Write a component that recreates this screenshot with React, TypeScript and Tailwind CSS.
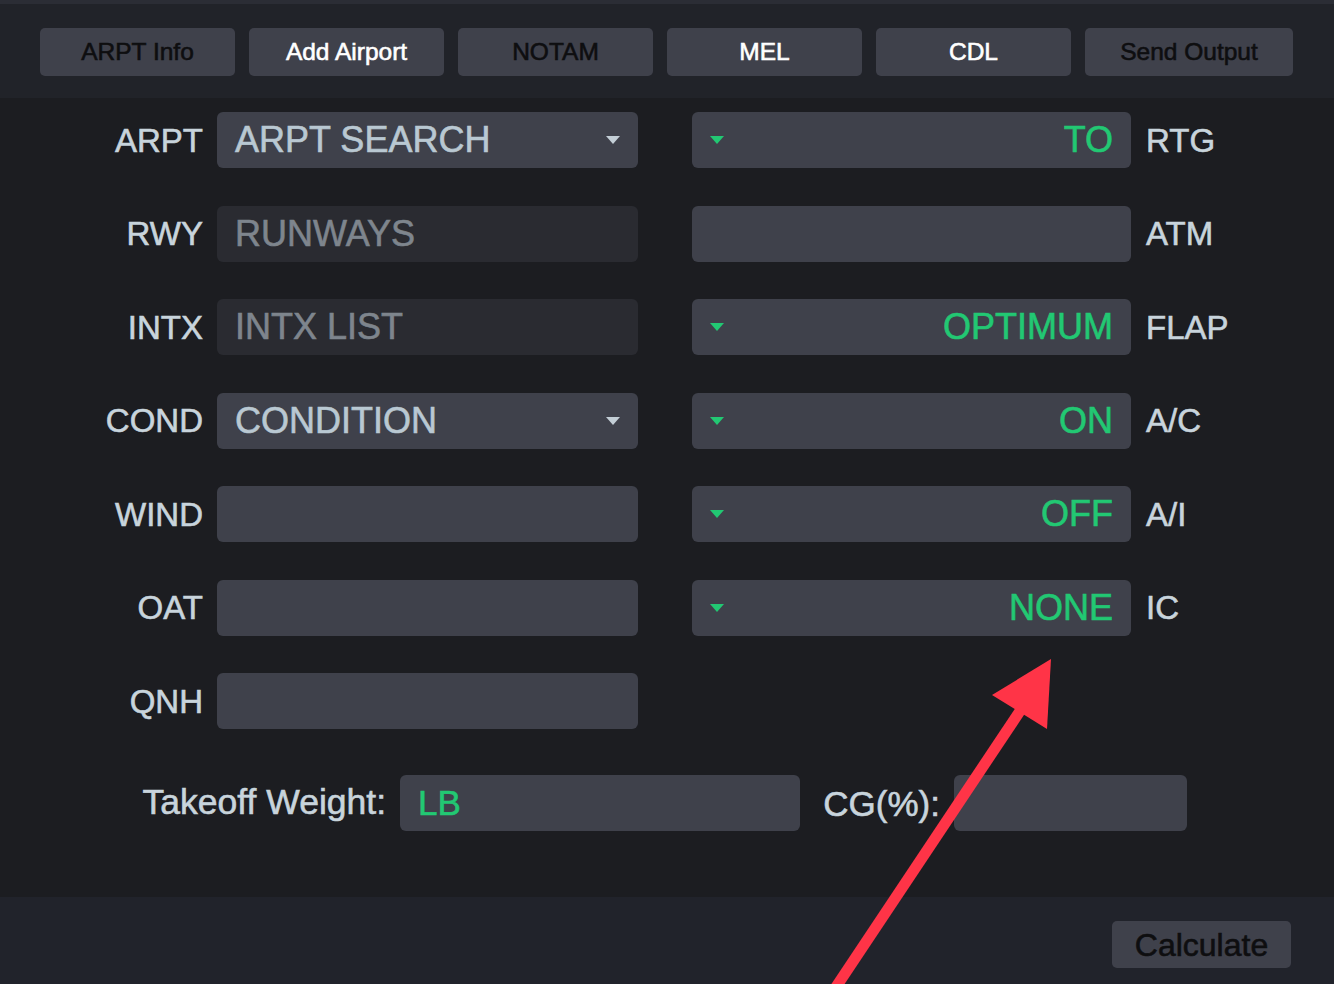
import React from "react";

const Caret = ({ green }: { green?: boolean }) => (
  <svg width="14" height="8" viewBox="0 0 14 8" className="shrink-0">
    <polygon points="0,0 14,0 7,8" fill={green ? "#22c873" : "#c3ced6"} />
  </svg>
);

function LeftField({ label, value, kind }: { label: string; value?: string; kind: "select" | "dim" | "empty" }) {
  const bg = kind === "dim" ? "bg-[#2a2b31]" : "bg-[#3f414b]";
  return (
    <div className="flex items-center">
      <div className="w-[203px] text-right text-[33px] text-[#c8d4dc] leading-none">{label}</div>
      <div className={`ml-[14px] w-[421px] h-14 rounded-[6px] ${bg} flex items-center pl-[18px] pr-[18px]`}>
        {value && (
          <span className={`flex-1 text-[36px] leading-none ${kind === "dim" ? "text-[#7e858d]" : "text-[#b9c8d2]"}`}>{value}</span>
        )}
        {kind === "select" && <Caret />}
      </div>
    </div>
  );
}

function RightField({ label, value, caret }: { label: string; value?: string; caret?: boolean }) {
  return (
    <div className="flex items-center ml-[54px]">
      <div className="w-[439px] h-14 rounded-[6px] bg-[#3f414b] flex items-center pl-[18px] pr-[18px]">
        {caret && <Caret green />}
        <span className="flex-1 text-right text-[36px] leading-none text-[#22c873]">{value}</span>
      </div>
      <div className="ml-[15px] text-[33px] text-[#c8d4dc] leading-none">{label}</div>
    </div>
  );
}

const rows: { l: string; lv?: string; lk: "select" | "dim" | "empty"; r?: string; rv?: string; rc?: boolean }[] = [
  { l: "ARPT", lv: "ARPT SEARCH", lk: "select", r: "RTG", rv: "TO", rc: true },
  { l: "RWY", lv: "RUNWAYS", lk: "dim", r: "ATM", rv: "", rc: false },
  { l: "INTX", lv: "INTX LIST", lk: "dim", r: "FLAP", rv: "OPTIMUM", rc: true },
  { l: "COND", lv: "CONDITION", lk: "select", r: "A/C", rv: "ON", rc: true },
  { l: "WIND", lk: "empty", r: "A/I", rv: "OFF", rc: true },
  { l: "OAT", lk: "empty", r: "IC", rv: "NONE", rc: true },
  { l: "QNH", lk: "empty" },
];

const buttons = [
  { t: "ARPT Info", dark: true, w: "w-[195px]" },
  { t: "Add Airport", dark: false, w: "w-[195px]" },
  { t: "NOTAM", dark: true, w: "w-[195px]" },
  { t: "MEL", dark: false, w: "w-[195px]" },
  { t: "CDL", dark: false, w: "w-[195px]" },
  { t: "Send Output", dark: true, w: "w-[208px]" },
];

export default function App() {
  return (
    <div
      className="relative w-[1334px] h-[984px] overflow-hidden flex flex-col bg-[#1c1d21] [-webkit-text-stroke:0.6px]"
      style={{ fontFamily: "'Liberation Sans', Arial, sans-serif" }}
    >
      <div className="h-[4px] bg-[#2b2d35]" />
      <div className="h-[94px] bg-[#212329] flex items-start pt-[24px] pl-[40px] gap-[14px]">
        {buttons.map((b) => (
          <div
            key={b.t}
            className={`${b.w} h-12 rounded-[5px] bg-[#3f414b] flex items-center justify-center text-[24.5px] ${b.dark ? "text-[#0e0e10]" : "text-white"}`}
          >
            {b.t}
          </div>
        ))}
      </div>
      <div className="flex-1 flex flex-col pt-[14px]">
        <div className="flex flex-col gap-[37.5px]">
          {rows.map((r) => (
            <div key={r.l} className="flex items-center">
              <LeftField label={r.l} value={r.lv} kind={r.lk} />
              {r.r && <RightField label={r.r} value={r.rv} caret={r.rc} />}
            </div>
          ))}
        </div>
        <div className="flex items-center mt-[46px]">
          <div className="w-[400px] pr-[14px] text-right text-[35.5px] text-[#c8d4dc] leading-none">Takeoff Weight:</div>
          <div className="w-[400px] h-14 rounded-[6px] bg-[#3f414b] flex items-center pl-[18px] text-[35px] text-[#22c873]">LB</div>
          <div className="w-[154px] pl-[16px] pr-[14px] text-right text-[35px] text-[#c8d4dc] leading-none">CG(%):</div>
          <div className="w-[233px] h-14 rounded-[6px] bg-[#3f414b]" />
        </div>
      </div>
      <div className="h-[87px] bg-[#21232b] flex items-start justify-end pt-[24px] pr-[43px]">
        <div className="w-[179px] h-[47px] rounded-[5px] bg-[#3f414b] flex items-center justify-center text-[32px] text-[#0e0e10]">
          Calculate
        </div>
      </div>
      <svg className="absolute inset-0 pointer-events-none" width="1334" height="984" viewBox="0 0 1334 984">
        <line x1="834" y1="990" x2="1022" y2="708" stroke="#ff3447" strokeWidth="11" />
        <polygon points="1051,659 992,695 1047,729" fill="#ff3447" />
      </svg>
    </div>
  );
}
